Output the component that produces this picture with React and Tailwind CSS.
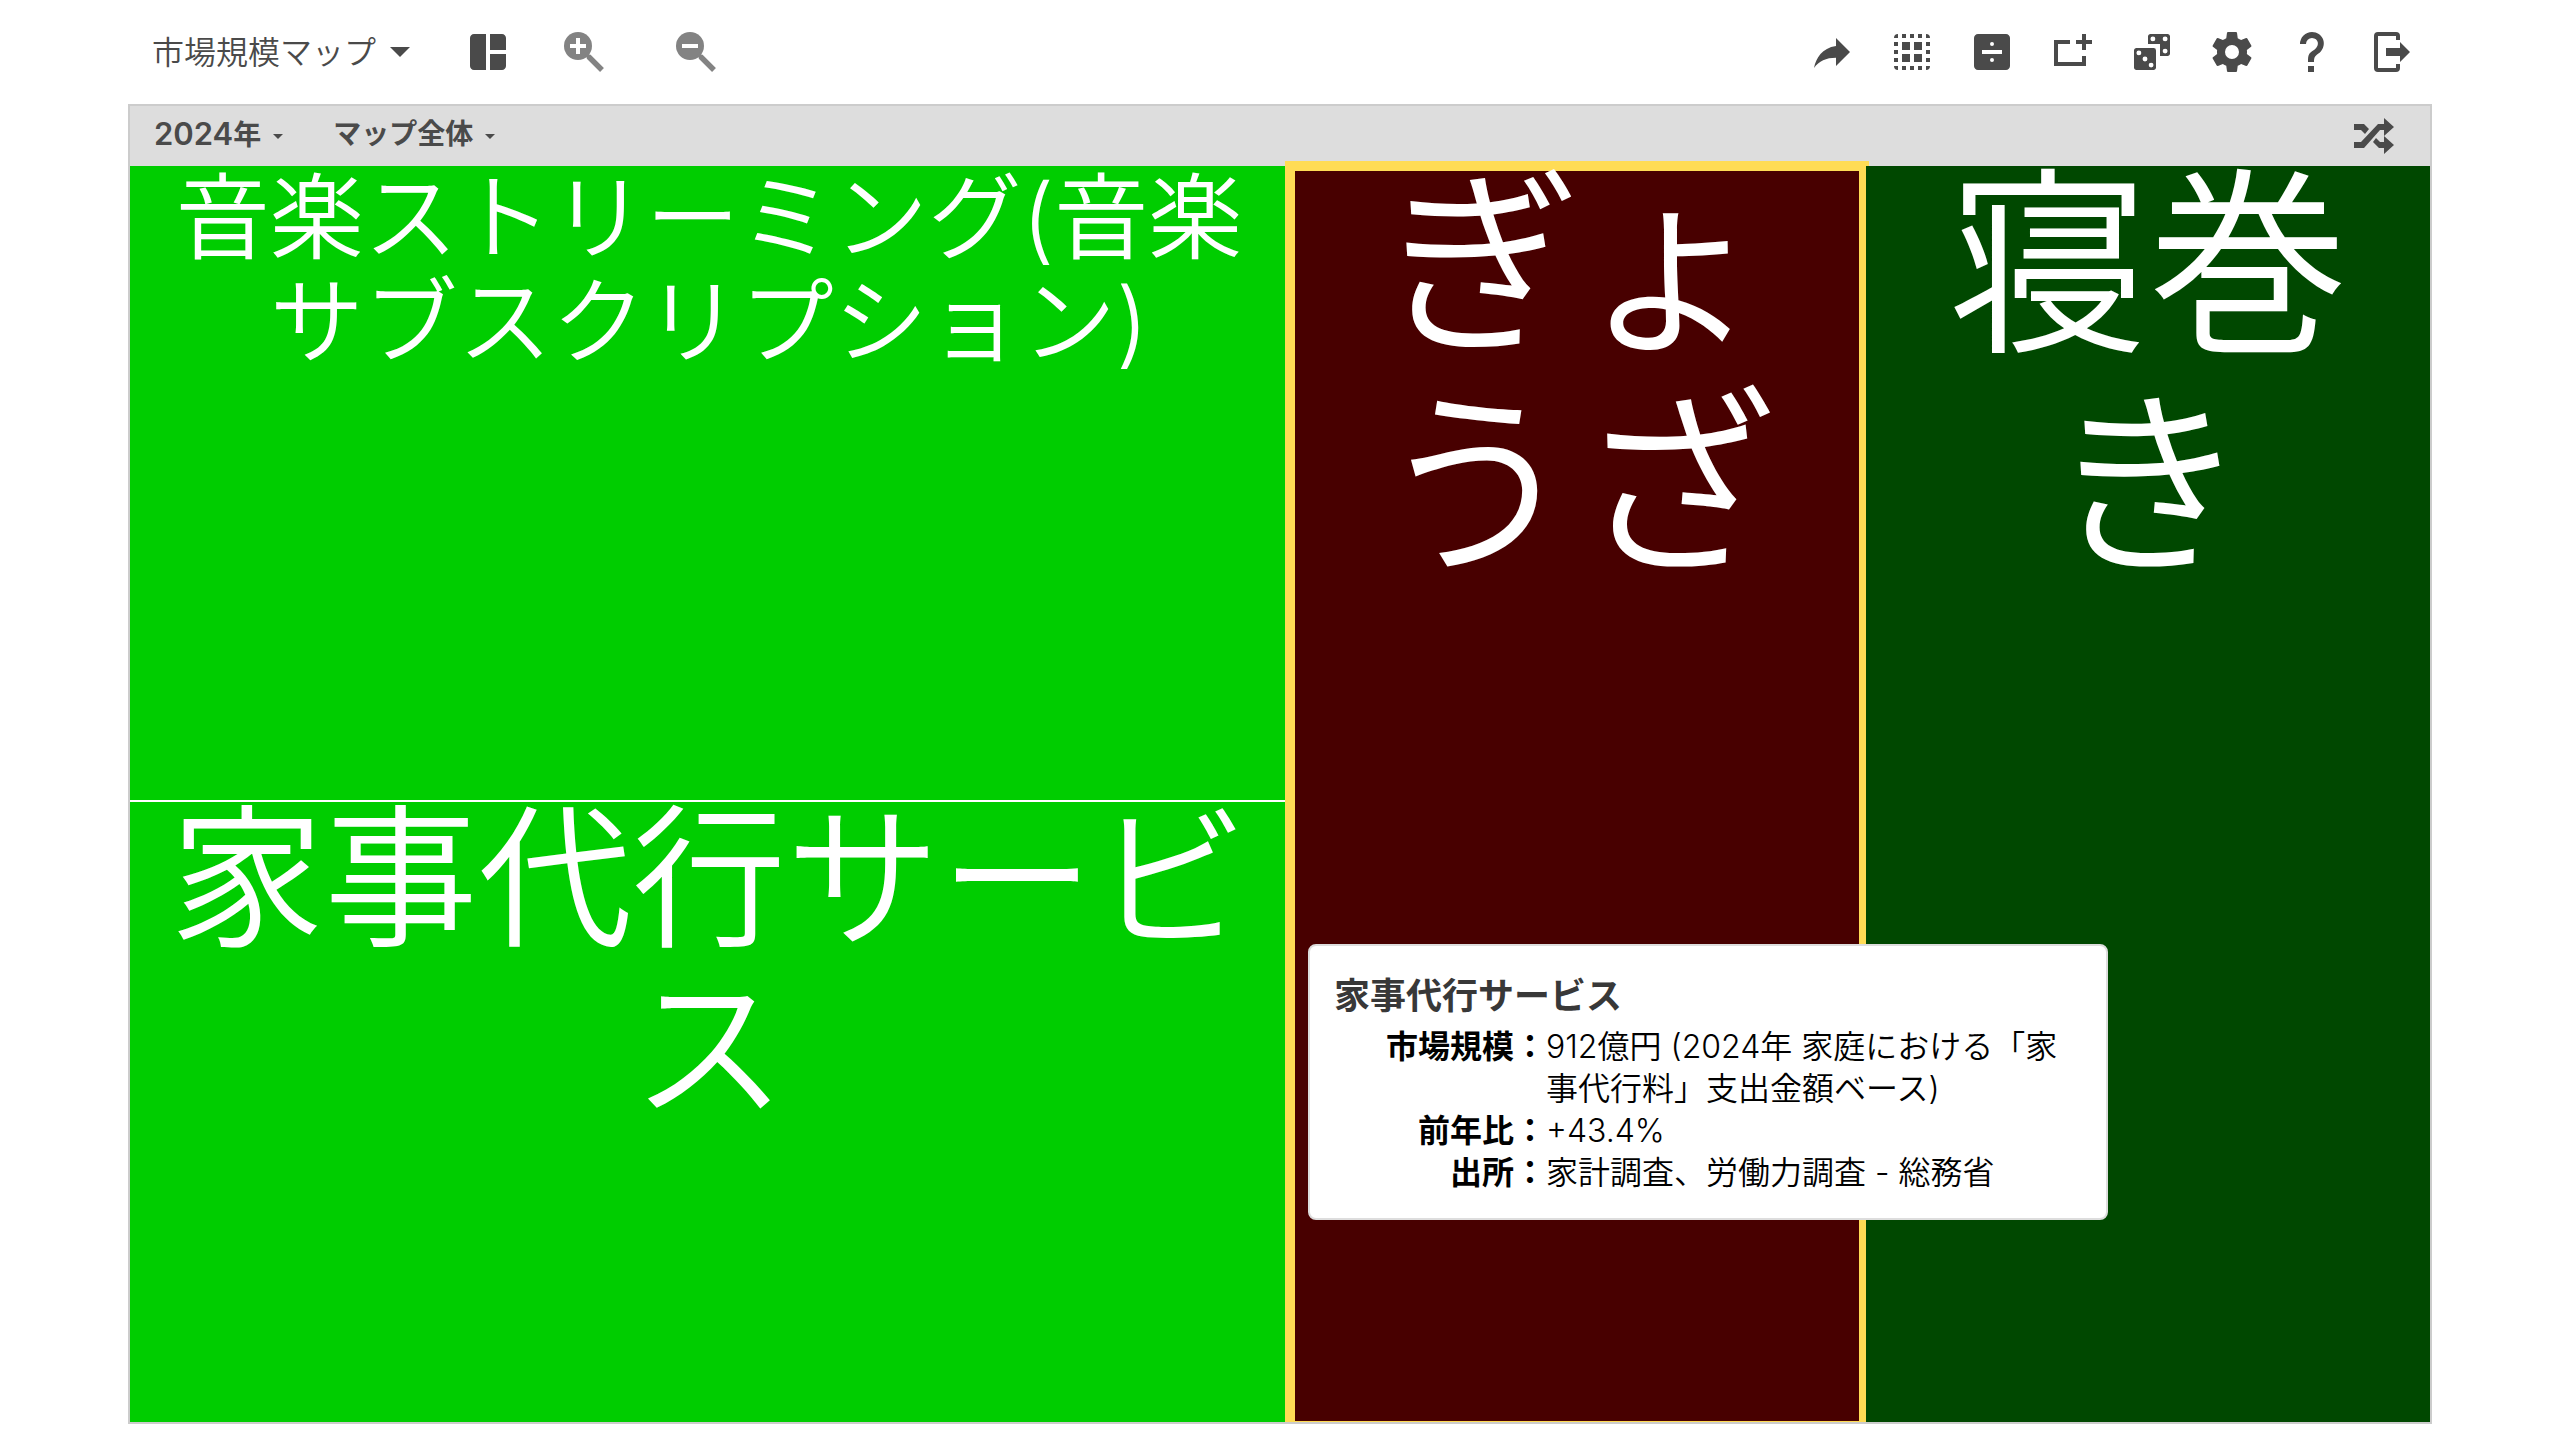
const ink = "#4a4a4a";

const icons = {
  layout: "M5,3C3.89,3 3,3.89 3,5V19C3,20.11 3.89,21 5,21H11V3M13,3V11H21V5C21,3.89 20.11,3 19,3M13,13V21H19C20.11,21 21,20.11 21,19V13",
  share: "M14,5V9C7,10 4,15 3,20C5.5,16.5 9,14.9 14,14.9V19L21,12L14,5Z",
  group: "M5 3A2 2 0 0 0 3 5H5M7 3V5H9V3M11 3V5H13V3M15 3V5H17V3M19 3V5H21A2 2 0 0 0 19 3M3 7V9H5V7M7 7V11H11V7M13 7V11H17V7M19 7V9H21V7M3 11V13H5V11M19 11V13H21V11M7 13V17H11V13M13 13V17H17V13M3 15V17H5V15M19 15V17H21V15M3 19A2 2 0 0 0 5 21V19M7 19V21H9V19M11 19V21H13V19M15 19V21H17V19M19 19V21A2 2 0 0 0 21 19",
  divide: "M19 3H5C3.9 3 3 3.9 3 5V19C3 20.1 3.9 21 5 21H19C20.1 21 21 20.1 21 19V5C21 3.9 20.1 3 19 3M12 7A1 1 0 0 1 12 9A1 1 0 0 1 12 7M12 15A1 1 0 0 1 12 17A1 1 0 0 1 12 15M17 13H7V11H17Z",
  addBox: "M17 14H19V19H3V6H11V8H5V17H17ZM17 3H19V6H22V8H19V11H17V8H14V6H17Z",
  dice: "M19.78,3H11.22C10.55,3 10,3.55 10,4.22V8H16V14H19.78C20.45,14 21,13.45 21,12.78V4.22C21,3.55 20.45,3 19.78,3M12.44,6.67A1.23,1.23 0 0,1 12.44,4.21A1.23,1.23 0 0,1 12.44,6.67M18.56,12.78A1.23,1.23 0 0,1 18.56,10.32A1.23,1.23 0 0,1 18.56,12.78M18.56,6.67A1.23,1.23 0 0,1 18.56,4.21A1.23,1.23 0 0,1 18.56,6.67M4.22,10H12.78A1.22,1.22 0 0,1 14,11.22V19.78C14,20.45 13.45,21 12.78,21H4.22C3.55,21 3,20.45 3,19.78V11.22C3,10.55 3.55,10 4.22,10M8.5,14.28A1.22,1.22 0 0,0 8.5,16.72A1.22,1.22 0 0,0 8.5,14.28M5.44,11.22A1.22,1.22 0 0,0 5.44,13.66A1.22,1.22 0 0,0 5.44,11.22M11.55,17.33A1.22,1.22 0 0,0 11.55,19.77A1.22,1.22 0 0,0 11.55,17.33Z",
  cog: "M12,15.5A3.5,3.5 0 0,1 8.5,12A3.5,3.5 0 0,1 12,8.5A3.5,3.5 0 0,1 15.5,12A3.5,3.5 0 0,1 12,15.5M19.43,12.97C19.47,12.65 19.5,12.33 19.5,12C19.5,11.67 19.47,11.34 19.43,11L21.54,9.37C21.73,9.22 21.78,8.95 21.66,8.73L19.66,5.27C19.54,5.05 19.27,4.96 19.05,5.05L16.56,6.05C16.04,5.66 15.5,5.32 14.87,5.07L14.5,2.42C14.46,2.18 14.25,2 14,2H10C9.75,2 9.54,2.18 9.5,2.42L9.13,5.07C8.5,5.32 7.96,5.66 7.44,6.05L4.95,5.05C4.73,4.96 4.46,5.05 4.34,5.27L2.34,8.73C2.21,8.95 2.27,9.22 2.46,9.37L4.57,11C4.53,11.34 4.5,11.67 4.5,12C4.5,12.33 4.53,12.65 4.57,12.97L2.46,14.63C2.27,14.78 2.21,15.05 2.34,15.27L4.34,18.73C4.46,18.95 4.73,19.03 4.95,18.95L7.44,17.94C7.96,18.34 8.5,18.68 9.13,18.93L9.5,21.58C9.54,21.82 9.75,22 10,22H14C14.25,22 14.46,21.82 14.5,21.58L14.87,18.93C15.5,18.67 16.04,18.34 16.56,17.94L19.05,18.95C19.27,19.03 19.54,18.95 19.66,18.73L21.66,15.27C21.78,15.05 21.73,14.78 21.54,14.63L19.43,12.97Z",
  help: "M10,19H13V22H10V19M12,2C17.35,2.22 19.68,7.62 16.5,11.67C15.67,12.67 14.33,13.33 13.67,14.17C13,15 13,16 13,17H10C10,15.33 10,13.92 10.67,12.92C11.33,11.92 12.67,11.33 13.5,10.67C15.92,8.43 15.32,5.26 12,5A3,3 0 0,0 9,8H6A6,6 0 0,1 12,2Z",
  exit: "M5 2H14A2 2 0 0 1 16 4V6H14V4H5V20H14V18H16V20A2 2 0 0 1 14 22H5A2 2 0 0 1 3 20V4A2 2 0 0 1 5 2ZM16 7L21 12L16 17V14H9V10H16Z",
};

const actions = [
  { icon: "share", label: "共有" },
  { icon: "group", label: "グループ" },
  { icon: "divide", label: "分割" },
  { icon: "addBox", label: "追加" },
  { icon: "dice", label: "ランダム" },
  { icon: "cog", label: "設定" },
  { icon: "help", label: "ヘルプ" },
  { icon: "exit", label: "終了" },
];

const facts = [
  { term: "市場規模：", value: "912億円 (2024年 家庭における「家事代行料」支出金額ベース)" },
  { term: "前年比：", value: "+43.4%" },
  { term: "出所：", value: "家計調査、労働力調査 - 総務省" },
];

function IconButton({ icon, label }) {
  return (
    <button type="button" aria-label={label} className="size-12">
      <svg viewBox="0 0 24 24" className="size-12" fill={ink} fillRule="evenodd">
        <path d={icons[icon]} />
      </svg>
    </button>
  );
}

function ZoomButton({ sign, label }) {
  return (
    <button type="button" aria-label={label} className="size-10">
      <svg viewBox="0 0 40 40" className="size-10" fill="none">
        <circle cx="14" cy="14" r="14" fill="#838383" />
        <path d="M22 22L26 26" stroke="#838383" strokeWidth="4" />
        <path d="M24.5 24.5L38 38" stroke="#838383" strokeWidth="5.4" />
        <path d={sign} stroke="#fff" strokeWidth="4" />
      </svg>
    </button>
  );
}

function Caret({ className }) {
  return (
    <svg viewBox="0 0 20 10" className={className} fill={ink}>
      <path d="M0 0H20L10 10Z" />
    </svg>
  );
}

function Tooltip() {
  return (
    <div
      role="tooltip"
      className="absolute left-[1178px] top-[778px] w-[800px] rounded-lg border-2 border-[#dddddd] bg-white p-6 text-left"
    >
      <h2 className="text-4xl leading-[52px] font-bold text-[#383838]">家事代行サービス</h2>
      <dl className="mt-1 grid grid-cols-[212px_1fr] text-[32px] leading-[42px] text-black">
        {facts.map((f) => (
          <div key={f.term} className="contents">
            <dt className="text-right font-bold">{f.term}</dt>
            <dd>{f.value}</dd>
          </div>
        ))}
      </dl>
    </div>
  );
}

export default function App() {
  return (
    <div
      lang="ja"
      className="flex h-screen flex-col bg-white px-[5%] pb-4 font-['Inter','Noto_Sans_CJK_JP',sans-serif] font-[350] text-[#4a4a4a]"
    >
      <header className="flex h-[104px] shrink-0 items-center justify-between pr-4 pl-6">
        <div className="flex items-center">
          <button type="button" className="flex items-center gap-3.5 text-[32px]">
            <span className="pt-0.5">市場規模マップ</span>
            <Caret className="h-2.5 w-5" />
          </button>
          <div className="ml-[54px] flex items-center">
            <IconButton icon="layout" label="レイアウト" />
          </div>
          <div className="ml-[52px] flex items-center gap-[72px]">
            <ZoomButton label="拡大" sign="M6 14H22M14 6V22" />
            <ZoomButton label="縮小" sign="M6 14H22" />
          </div>
        </div>
        <nav className="flex items-center gap-8">
          {actions.map((a) => (
            <IconButton key={a.icon} {...a} />
          ))}
        </nav>
      </header>

      <main className="flex min-h-0 flex-1 flex-col border-2 border-[#cccccc]">
        <div className="flex h-[60px] shrink-0 items-center justify-between bg-[#dddddd] pr-[34px] pl-6 text-[28px] font-bold">
          <div className="flex items-center gap-[50px] pb-1">
            <button type="button" className="flex items-center gap-3">
              <span>
                <span className="text-[31px] font-semibold">2024</span>年
              </span>
              <Caret className="mt-1 h-[5px] w-2.5" />
            </button>
            <button type="button" className="flex items-center gap-3">
              マップ全体
              <Caret className="mt-1 h-[5px] w-2.5" />
            </button>
          </div>
          <button type="button" aria-label="シャッフル">
            <svg viewBox="0 0 42 36" className="h-9 w-[42px]" fill={ink}>
              <path d="M0 6H10L15 11L11 16L7 12H0ZM0 24H7L24 6H30V0L40 9L30 18V12H26L10 30H0ZM22 20L26 24H30V18L40 27L30 36V30H25L19 24Z" />
            </svg>
          </button>
        </div>

        <div className="relative grid min-h-0 flex-1 grid-cols-[1158fr_574fr_564fr] gap-0.5 bg-white text-center text-white">
          <div className="grid min-h-0 grid-rows-[634fr_620fr] gap-0.5">
            <section className="bg-[#00cd00] px-10 text-[94px] leading-[104px]">
              <p>音楽ストリーミング(音楽サブスクリプション)</p>
            </section>
            <section className="bg-[#00cd00] px-10 text-[154px] leading-[170px]">
              <p className="-mt-2">家事代行サービス</p>
            </section>
          </div>
          <section className="relative bg-[#480000] px-20 text-[200px] leading-[220px]">
            <div className="absolute -inset-x-[5px] -top-[5px] bottom-0 border-x-[10px] border-t-[10px] border-b border-[#ffdc55]" />
            <p className="relative -mt-3">ぎょうざ</p>
          </section>
          <section className="relative bg-[#004800] px-20 text-[200px] leading-[220px]">
            <p className="relative -mt-3">寝巻き</p>
          </section>
          <Tooltip />
        </div>
      </main>
    </div>
  );
}
